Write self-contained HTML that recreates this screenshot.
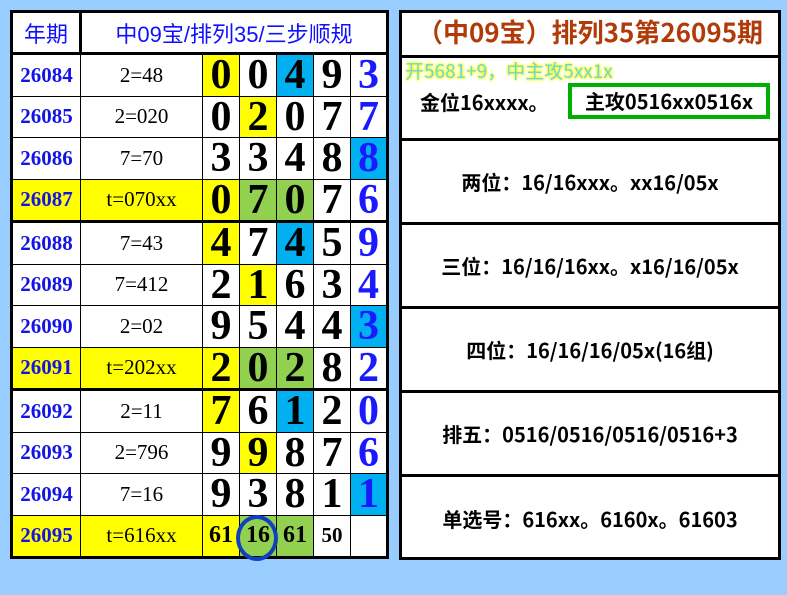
<!DOCTYPE html>
<html><head><meta charset="utf-8"><style>
body{margin:0;width:787px;height:595px;background:#99ccff;position:relative;overflow:hidden}
table{border-collapse:collapse;position:absolute;left:10px;top:10px;table-layout:fixed;border:3px solid #000}
td{border:1px solid #000;padding:0;text-align:center;background:#fff;overflow:hidden;white-space:nowrap}
.h td{height:39px;border-bottom:3px solid #000;color:#1010ff;font:22px "Liberation Sans","Noto Sans CJK SC",sans-serif}
td.n{color:#1414e6;font:bold 21px "Liberation Serif",serif}
td.e{font:21px "Liberation Serif",serif;color:#000}
td.d{font:bold 42px "Liberation Serif",serif;color:#000;line-height:40px}
td.b{color:#1a1aff}
tr.r td{height:40.5px}
tr.t td{border-bottom:3px solid #000}
.y{background:#ffff00!important}.c{background:#00b0f0!important}.g{background:#92d050!important}
td.s{font:bold 24px "Liberation Serif",serif}
.p{position:absolute;left:399px;top:10px;width:376px;height:544px;border:3px solid #000;background:#fff}
.row{position:absolute;left:0;width:376px;border-top:3px solid #000;text-align:center;font:bold 20px "Noto Sans CJK SC","Liberation Sans",sans-serif;color:#000}
</style></head><body>
<table>
<colgroup><col style="width:69px"><col style="width:122px"><col style="width:37px"><col style="width:37px"><col style="width:37px"><col style="width:37px"><col style="width:37px"></colgroup>
<tr class="h"><td style="border-right:3px solid #000">年期</td><td colspan="6">中09宝/排列35/三步顺规</td></tr>
<tr class="r"><td class="n">26084</td><td class="e">2=48</td><td class="d y">0</td><td class="d">0</td><td class="d c">4</td><td class="d">9</td><td class="d b">3</td></tr>
<tr class="r"><td class="n">26085</td><td class="e">2=020</td><td class="d">0</td><td class="d y">2</td><td class="d">0</td><td class="d">7</td><td class="d b">7</td></tr>
<tr class="r"><td class="n">26086</td><td class="e">7=70</td><td class="d">3</td><td class="d">3</td><td class="d">4</td><td class="d">8</td><td class="d b c">8</td></tr>
<tr class="r t"><td class="n y">26087</td><td class="e y">t=070xx</td><td class="d y">0</td><td class="d g">7</td><td class="d g">0</td><td class="d">7</td><td class="d b">6</td></tr>
<tr class="r"><td class="n">26088</td><td class="e">7=43</td><td class="d y">4</td><td class="d">7</td><td class="d c">4</td><td class="d">5</td><td class="d b">9</td></tr>
<tr class="r"><td class="n">26089</td><td class="e">7=412</td><td class="d">2</td><td class="d y">1</td><td class="d">6</td><td class="d">3</td><td class="d b">4</td></tr>
<tr class="r"><td class="n">26090</td><td class="e">2=02</td><td class="d">9</td><td class="d">5</td><td class="d">4</td><td class="d">4</td><td class="d b c">3</td></tr>
<tr class="r t"><td class="n y">26091</td><td class="e y">t=202xx</td><td class="d y">2</td><td class="d g">0</td><td class="d g">2</td><td class="d">8</td><td class="d b">2</td></tr>
<tr class="r"><td class="n">26092</td><td class="e">2=11</td><td class="d y">7</td><td class="d">6</td><td class="d c">1</td><td class="d">2</td><td class="d b">0</td></tr>
<tr class="r"><td class="n">26093</td><td class="e">2=796</td><td class="d">9</td><td class="d y">9</td><td class="d">8</td><td class="d">7</td><td class="d b">6</td></tr>
<tr class="r"><td class="n">26094</td><td class="e">7=16</td><td class="d">9</td><td class="d">3</td><td class="d">8</td><td class="d">1</td><td class="d b c">1</td></tr>
<tr class="r"><td class="n y">26095</td><td class="e y">t=616xx</td><td class="s y">61</td><td class="s g">16</td><td class="s g">61</td><td class="s" style="font-size:21px">50</td><td></td></tr>
</table>
<div style="position:absolute;left:236px;top:515px;width:34px;height:38px;border:4px solid #1040c0;border-radius:50%"></div>
<div class="p">
<div style="position:absolute;left:0;top:0;width:376px;height:42px;line-height:42px;text-align:center;font:bold 26px 'Noto Sans CJK SC','Liberation Sans',sans-serif;color:#b03a08">（中09宝）排列35第26095期</div>
<div class="row" style="top:42px;height:82px">
<div style="position:absolute;left:3px;top:1px;color:#6ad8e0;font:normal 19px 'Noto Sans CJK SC','Liberation Sans',sans-serif;line-height:24px;text-shadow:0 0 2px #ff0,0 0 2px #ff0,0 0 3px #ff0">开5681+9，中主攻5xx1x</div>
<div style="position:absolute;left:18px;top:29px;line-height:30px">金位16xxxx。</div>
<div style="position:absolute;left:166px;top:25px;width:194px;height:28px;border:4px solid #00b000;line-height:28px">主攻0516xx0516x</div>
</div>
<div class="row" style="top:125px;height:81px;line-height:81px">两位：16/16xxx。xx16/05x</div>
<div class="row" style="top:209px;height:81px;line-height:81px">三位：16/16/16xx。x16/16/05x</div>
<div class="row" style="top:293px;height:81px;line-height:81px">四位：16/16/16/05x(16组)</div>
<div class="row" style="top:377px;height:81px;line-height:81px">排五：0516/0516/0516/0516+3</div>
<div class="row" style="top:461px;height:83px;line-height:83px">单选号：616xx。6160x。61603</div>
</div>
</body></html>
